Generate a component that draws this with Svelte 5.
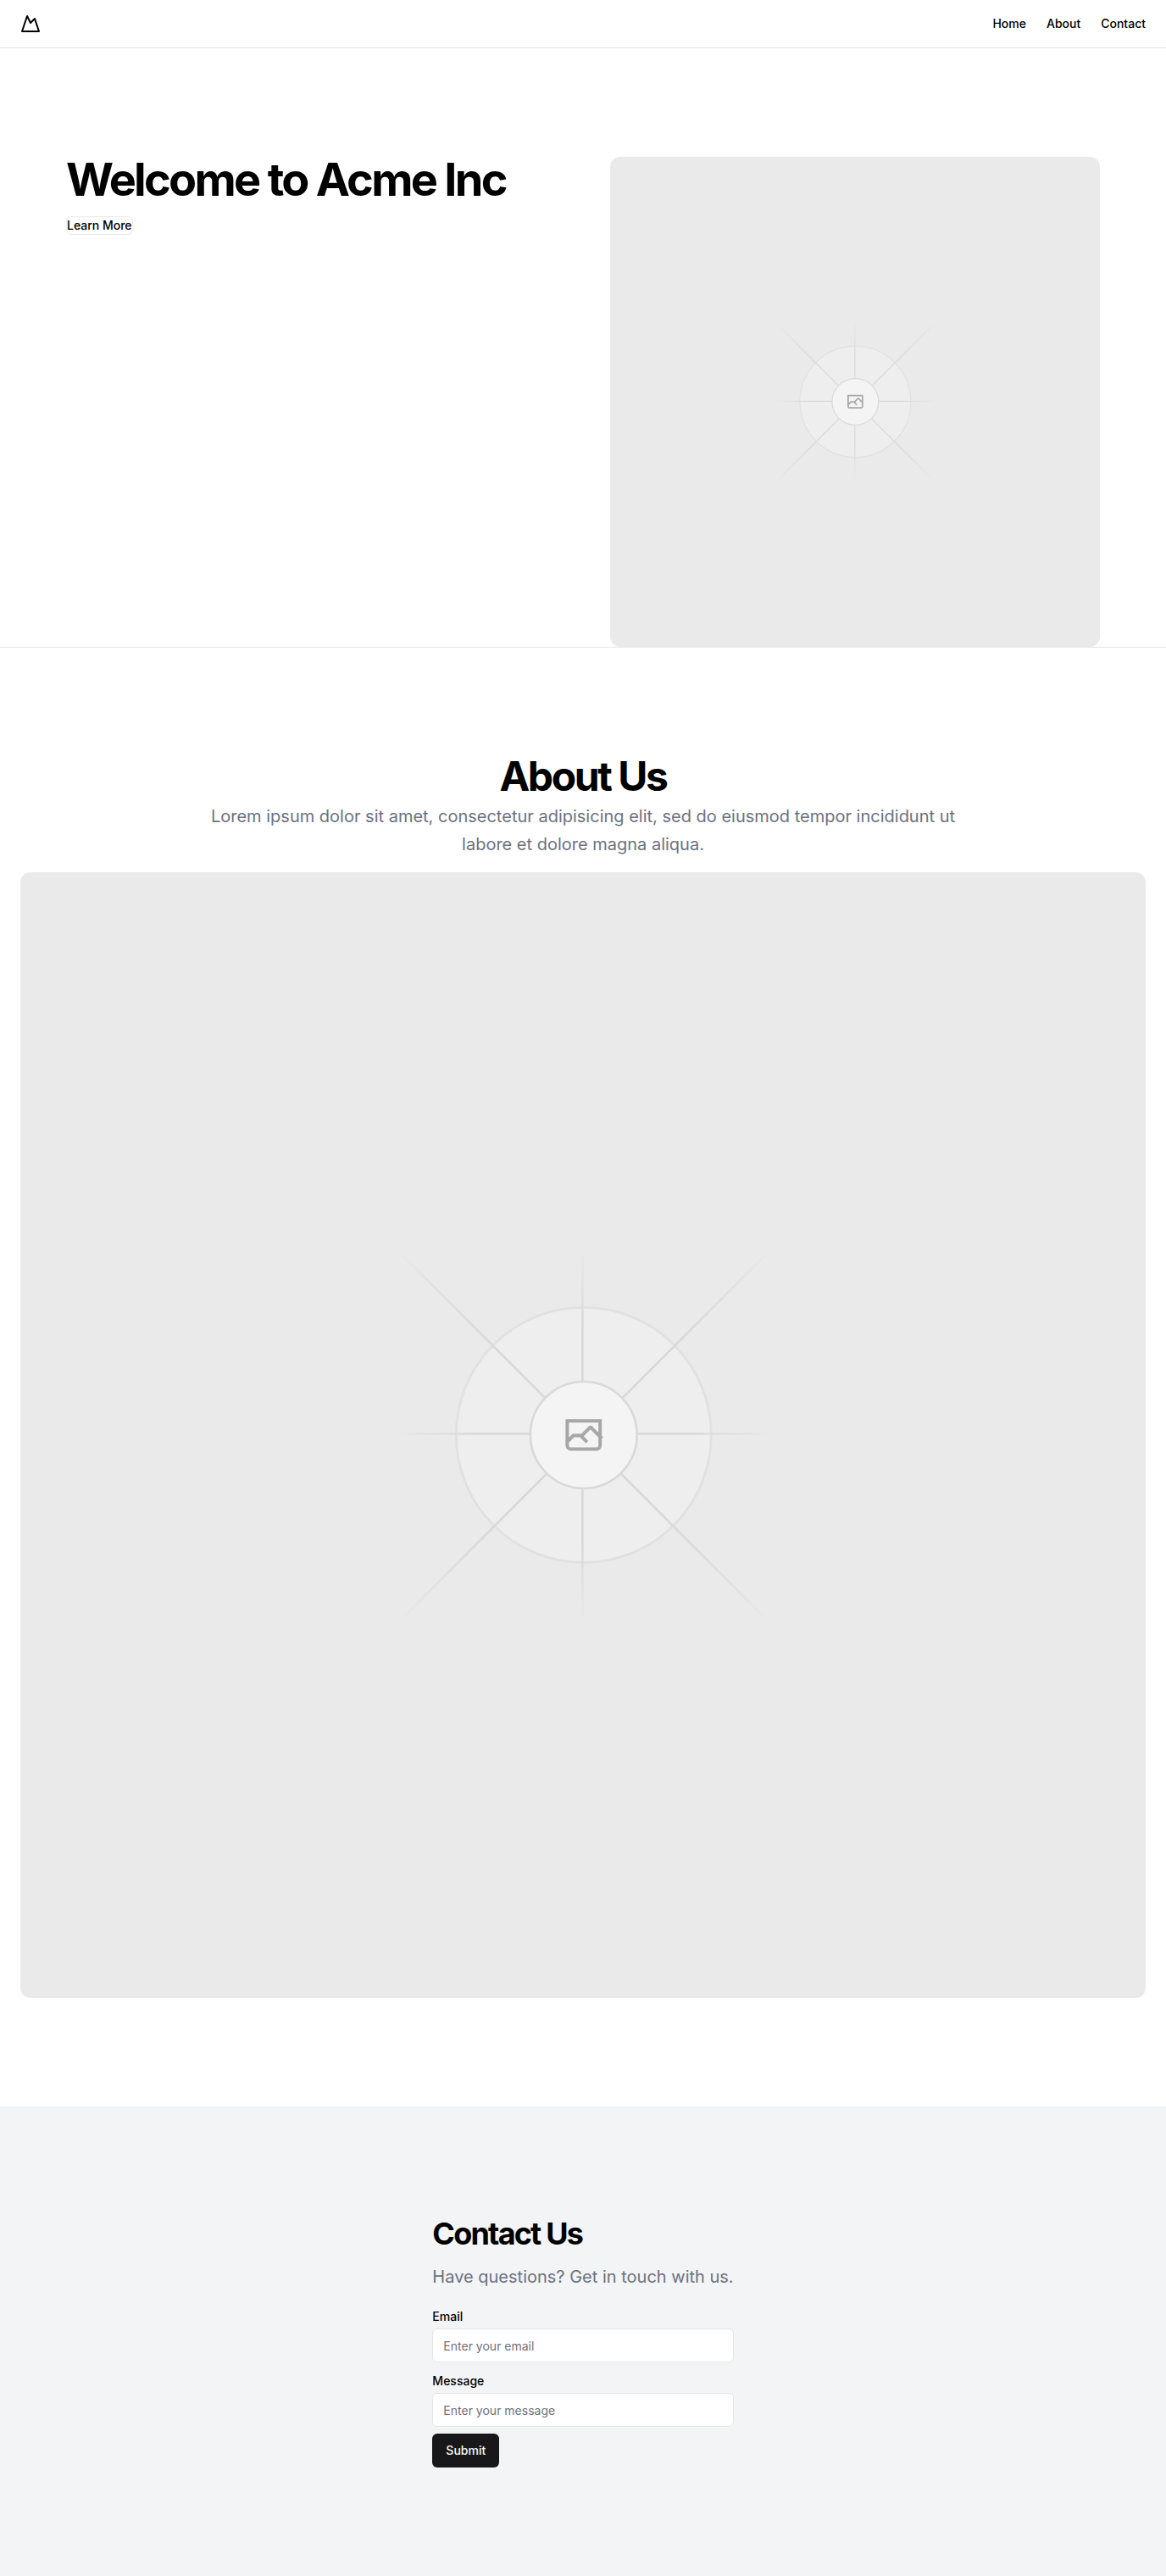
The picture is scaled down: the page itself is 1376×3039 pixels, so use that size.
<script>
  const links = [
    { label: 'Home', href: '#home' },
    { label: 'About', href: '#about' },
    { label: 'Contact', href: '#contact' }
  ];
</script>

{#snippet fade()}
  <stop stop-color="#c9c9c9" stop-opacity="0" />
  <stop offset="0.208" stop-color="#c9c9c9" />
  <stop offset="0.792" stop-color="#c9c9c9" />
  <stop offset="1" stop-color="#c9c9c9" stop-opacity="0" />
{/snippet}

{#snippet placeholder(id, label)}
  <svg class="placeholder" viewBox="0 0 1200 1200" fill="none" role="img" aria-label={label}>
    <defs>
      <linearGradient id="{id}-a" x1="554.061" x2="-.48" y1=".083" y2=".087" gradientUnits="userSpaceOnUse">{@render fade()}</linearGradient>
      <linearGradient id="{id}-b" x1="796.912" x2="404.507" y1="599.963" y2="599.965" gradientUnits="userSpaceOnUse">{@render fade()}</linearGradient>
      <linearGradient id="{id}-c" x1="600.792" x2="600.794" y1="403.677" y2="796.082" gradientUnits="userSpaceOnUse">{@render fade()}</linearGradient>
      <linearGradient id="{id}-d" x1="404.85" x2="796.972" y1="403.903" y2="796.02" gradientUnits="userSpaceOnUse">{@render fade()}</linearGradient>
    </defs>
    <rect width="1200" height="1200" fill="#eaeaea" />
    <g opacity="0.5">
      <g opacity="0.5">
        <circle cx="600.709" cy="599.88" r="136.62" fill="#fafafa" />
        <circle cx="600.709" cy="599.88" r="136" stroke="#c9c9c9" stroke-width="2.418" />
      </g>
      <path stroke="url(#{id}-a)" stroke-width="2.418" d="M0-1.209h553.581" transform="scale(1 -1) rotate(45 1163.11 91.165)" />
      <path stroke="url(#{id}-b)" stroke-width="2.418" d="M404.846 598.671h391.726" />
      <path stroke="url(#{id}-c)" stroke-width="2.418" d="M599.5 795.742V404.017" />
      <path stroke="url(#{id}-d)" stroke-width="2.418" d="m795.717 796.597-391.441-391.44" />
      <circle cx="600.709" cy="599.88" r="56.824" fill="#fff" />
      <path
        fill="#666"
        fill-rule="evenodd"
        clip-rule="evenodd"
        d="M616.426 586.58h-31.434v16.176l3.553-3.554.531-.531h9.068l.074-.074 8.463-8.463h2.565l7.18 7.181V586.58Zm-15.715 14.654 3.698 3.699 1.283 1.282-2.565 2.565-1.282-1.283-5.2-5.199h-6.066l-5.514 5.514-.073.073v2.876a2.418 2.418 0 0 0 2.418 2.418h26.598a2.418 2.418 0 0 0 2.418-2.418v-8.317l-8.463-8.463-7.181 7.181-.071.072Zm-19.347 5.442v4.085a6.045 6.045 0 0 0 6.046 6.045h26.598a6.044 6.044 0 0 0 6.045-6.045v-7.108l1.356-1.355-1.282-1.283-.074-.073v-17.989h-38.689v23.43l-.146.146.146.147Z"
      />
      <circle cx="600.709" cy="599.88" r="56.824" stroke="#c9c9c9" stroke-width="2.418" />
    </g>
  </svg>
{/snippet}

<header>
  <a class="logo" href="#home" aria-label="Acme Inc">
    <svg width="24" height="24" viewBox="0 0 24 24" fill="none" stroke="currentColor" stroke-width="2" stroke-linecap="round" stroke-linejoin="round" aria-hidden="true">
      <path d="m8 3 4 8 5-5 5 15H2L8 3z" />
    </svg>
  </a>
  <nav>
    {#each links as link}
      <a href={link.href}>{link.label}</a>
    {/each}
  </nav>
</header>

<main>
  <section class="hero" id="home">
    <div class="hero-grid">
      <div class="intro">
        <h1>Welcome to Acme Inc</h1>
        <a class="more" href="#about">Learn More</a>
      </div>
      {@render placeholder('hero', 'Hero')}
    </div>
  </section>

  <section class="about" id="about">
    <h2>About Us</h2>
    <p>
      Lorem ipsum dolor sit amet, consectetur adipisicing elit, sed do eiusmod tempor incididunt ut
      labore et dolore magna aliqua.
    </p>
    {@render placeholder('about', 'About')}
  </section>

  <section class="contact" id="contact">
    <div class="panel">
      <h2>Contact Us</h2>
      <p>Have questions? Get in touch with us.</p>
      <form onsubmit={(e) => e.preventDefault()}>
        <div class="field">
          <label for="email">Email</label>
          <input id="email" type="email" placeholder="Enter your email" />
        </div>
        <div class="field">
          <label for="message">Message</label>
          <input id="message" type="text" placeholder="Enter your message" />
        </div>
        <button type="submit">Submit</button>
      </form>
    </div>
  </section>
</main>

<style>
  :global(body) {
    background: #fff;
    color: #000;
    font-family: Inter, 'Liberation Sans', sans-serif;
    font-size: 16px;
    line-height: 24px;
  }

  header,
  section,
  header *,
  section * {
    box-sizing: border-box;
  }

  h1,
  h2,
  p {
    margin: 0;
  }

  h1,
  h2 {
    font-weight: 700;
    letter-spacing: -0.05em;
  }

  a {
    color: inherit;
    text-decoration: none;
  }

  header {
    display: flex;
    align-items: center;
    justify-content: space-between;
    padding: 16px 24px;
    border-bottom: 1px solid #e4e4e7;
  }

  .logo,
  .logo svg {
    display: block;
  }

  nav {
    display: flex;
    gap: 24px;
    font-size: 14px;
    font-weight: 500;
    line-height: 20px;
  }

  .placeholder {
    display: block;
    width: 100%;
    height: auto;
    border-radius: 12px;
  }

  .hero {
    padding-top: 128px;
    border-bottom: 1px solid #e4e4e7;
  }

  .hero-grid {
    display: grid;
    grid-template-columns: 1fr 1fr;
    align-items: start;
    gap: 64px;
    max-width: 1300px;
    margin: 0 auto;
    padding: 0 40px;
  }

  .intro {
    display: flex;
    flex-direction: column;
    align-items: flex-start;
    gap: 16px;
  }

  h1 {
    font-size: 54px;
    line-height: 54px;
  }

  .more {
    border: 1px solid #ececee;
    border-radius: 6px;
    font-size: 14px;
    font-weight: 500;
    line-height: 20px;
  }

  .about {
    display: flex;
    flex-direction: column;
    align-items: center;
    padding: 128px 24px;
    text-align: center;
  }

  .about h2 {
    margin-bottom: 8px;
    font-size: 48px;
    line-height: 47px;
  }

  p {
    color: #6b7280;
    font-size: 20px;
    line-height: 33px;
  }

  .about p {
    max-width: 900px;
    margin-bottom: 16px;
  }

  .contact {
    display: flex;
    justify-content: center;
    padding: 128px 24px;
    background: #f3f4f6;
  }

  .contact h2 {
    margin-bottom: 12px;
    font-size: 36px;
    line-height: 45px;
  }

  .contact p {
    margin-bottom: 16px;
  }

  form {
    display: flex;
    flex-direction: column;
    align-items: flex-start;
    gap: 8px;
  }

  .field {
    width: 100%;
  }

  label {
    display: block;
    font-size: 14px;
    font-weight: 500;
    line-height: 28px;
  }

  input {
    display: block;
    width: 100%;
    height: 40px;
    padding: 8px 12px;
    border: 1px solid #e4e4e7;
    border-radius: 6px;
    background: #fff;
    color: inherit;
    font: inherit;
    font-size: 14px;
    line-height: 20px;
  }

  input::placeholder {
    color: #71717a;
    opacity: 1;
  }

  button {
    height: 40px;
    padding: 8px 16px;
    border: 0;
    border-radius: 6px;
    background: #18181b;
    color: #fafafa;
    font: inherit;
    font-size: 14px;
    font-weight: 500;
    line-height: 20px;
    cursor: pointer;
  }

  @media (max-width: 800px) {
    .hero-grid {
      grid-template-columns: 1fr;
      padding: 0 24px;
    }
  }
</style>
